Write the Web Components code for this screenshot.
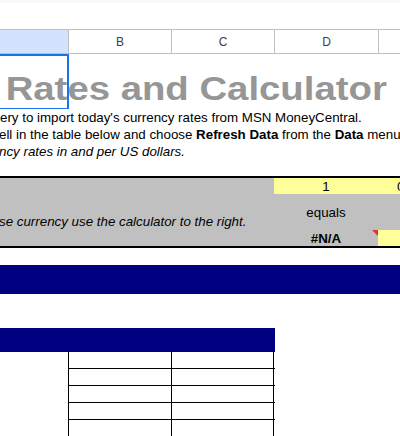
<!DOCTYPE html>
<html>
<head>
<meta charset="utf-8">
<title>Currency Rates and Calculator</title>
<style>
  html, body { margin: 0; padding: 0; background: #fff; overflow: hidden; }
  body { font-family: "Liberation Sans", Arial, sans-serif; width: 400px; height: 436px; }
</style>
</head>
<body>
<sheet-app></sheet-app>

<script>
class SheetApp extends HTMLElement {
    constructor() {
        super();
        this.attachShadow({ mode: 'open' });
        this.shadowRoot.innerHTML = `
            <style>
                :host { display: block; width: 400px; height: 436px; overflow: hidden; }
                .strip { height: 3px; background: #f8f9fa; }
                .toolbar { height: 26px; background: #fff; }
            </style>
            <div class="strip"></div>
            <div class="toolbar"></div>
            <sheet-columns></sheet-columns>
            <sheet-title></sheet-title>
            <sheet-notes></sheet-notes>
            <sheet-calculator></sheet-calculator>
            <sheet-banner></sheet-banner>
            <sheet-table></sheet-table>
        `;
    }
}

class SheetColumns extends HTMLElement {
    constructor() {
        super();
        this.attachShadow({ mode: 'open' });
        this.shadowRoot.innerHTML = `
            <style>
                :host {
                    display: grid;
                    grid-template-columns: 69px 103px 103px 104px 1fr;
                    height: 25px;
                    box-sizing: border-box;
                    border-top: 1px solid #c0c0c0;
                    border-bottom: 1px solid #c0c0c0;
                    font: 12px "Liberation Sans", Arial, sans-serif;
                    color: #3c4043;
                }
                div {
                    display: flex;
                    align-items: center;
                    justify-content: center;
                    box-sizing: border-box;
                    border-right: 1px solid #c0c0c0;
                }
                .selected { background: #d3e3fd; }
                .last { border-right: 0; }
            </style>
            <div class="selected"></div>
            <div>B</div>
            <div>C</div>
            <div>D</div>
            <div class="last"></div>
        `;
    }
}

class SheetTitle extends HTMLElement {
    constructor() {
        super();
        this.attachShadow({ mode: 'open' });
        this.shadowRoot.innerHTML = `
            <style>
                :host {
                    display: block;
                    position: relative;
                    height: 55px;
                    overflow: hidden;
                }
                h1 {
                    margin: 0;
                    padding: 14px 0 0 5px;
                    font: bold 34px/40px "Liberation Sans", Arial, sans-serif;
                    color: #969696;
                    white-space: nowrap;
                    transform: scaleX(1.127);
                    transform-origin: 0 0;
                }
                .selection {
                    position: absolute;
                    left: -3px;
                    top: 0;
                    width: 68px;
                    height: 52px;
                    border: 2px solid #1a73e8;
                }
            </style>
            <h1>Rates and Calculator</h1>
            <div class="selection"></div>
        `;
    }
}

class SheetNotes extends HTMLElement {
    constructor() {
        super();
        this.attachShadow({ mode: 'open' });
        this.shadowRoot.innerHTML = `
            <style>
                :host {
                    display: block;
                    height: 67px;
                    overflow: hidden;
                    font: 13.33px/17px "Liberation Sans", Arial, sans-serif;
                    color: #000;
                    white-space: nowrap;
                }
                p { margin: 0; }
                .b { margin-left: -1px; }
                .c { margin-left: -1px; font-style: italic; }
            </style>
            <p>ery to import today's currency rates from MSN MoneyCentral.</p>
            <p class="b">ell in the table below and choose <b>Refresh Data</b> from the <b>Data</b> menu</p>
            <p class="c">ncy rates in and per US dollars.</p>
        `;
    }
}

class SheetCalculator extends HTMLElement {
    constructor() {
        super();
        this.attachShadow({ mode: 'open' });
        this.shadowRoot.innerHTML = `
            <style>
                :host {
                    display: grid;
                    grid-template-columns: 274px 104px 1fr;
                    grid-template-rows: 16px 36px 16px;
                    box-sizing: border-box;
                    height: 72px;
                    background: #c0c0c0;
                    border-top: 2px solid #000;
                    border-bottom: 2px solid #000;
                    font: 13.33px/16px "Liberation Sans", Arial, sans-serif;
                    color: #000;
                }
                .note {
                    grid-column: 1;
                    grid-row: 2 / 4;
                    font-style: italic;
                    white-space: nowrap;
                    padding-top: 20px;
                    margin-left: -1px;
                }
                .cell {
                    display: flex;
                    align-items: center;
                    justify-content: center;
                    box-sizing: border-box;
                    padding-top: 2px;
                }
                .input { background: #ffff99; }
                .amount { grid-column: 2; grid-row: 1; }
                .currency { grid-column: 3; grid-row: 1; overflow: hidden; justify-content: flex-start; padding-left: 19px; }
                .equals { grid-column: 2; grid-row: 2; }
                .result { grid-column: 2; grid-row: 3; font-weight: bold; position: relative; }
                .result-cell { grid-column: 3; grid-row: 3; }
                .result::after {
                    content: "";
                    position: absolute;
                    top: 0;
                    right: 0;
                    border-top: 6px solid #dd3333;
                    border-left: 6px solid transparent;
                }
            </style>
            <div class="note">se currency use the calculator to the right.</div>
            <div class="cell input amount">1</div>
            <div class="cell input currency">0</div>
            <div class="cell equals">equals</div>
            <div class="cell result">#N/A</div>
            <div class="cell input result-cell"></div>
        `;
    }
}

class SheetBanner extends HTMLElement {
    constructor() {
        super();
        this.attachShadow({ mode: 'open' });
        this.shadowRoot.innerHTML = `
            <style>
                :host {
                    display: block;
                    height: 29px;
                    margin-top: 17px;
                    background: #000080;
                }
            </style>
        `;
    }
}

class SheetTable extends HTMLElement {
    constructor() {
        super();
        this.attachShadow({ mode: 'open' });
        const rows = Array.from({ length: 6 }, () => '<div class="row"><span></span><span></span></div>').join('');
        this.shadowRoot.innerHTML = `
            <style>
                :host { display: block; margin-top: 34px; }
                .head { width: 275px; height: 24px; background: #000080; }
                .row {
                    display: grid;
                    grid-template-columns: 103px 103px;
                    margin-left: 68px;
                    width: 207px;
                    height: 17px;
                    box-sizing: border-box;
                    border-bottom: 1px solid #000;
                }
                span { border-left: 1px solid #000; }
                span:last-child { border-right: 1px solid #000; }
            </style>
            <div class="head"></div>
            ${rows}
        `;
    }
}

customElements.define('sheet-app', SheetApp);
customElements.define('sheet-columns', SheetColumns);
customElements.define('sheet-title', SheetTitle);
customElements.define('sheet-notes', SheetNotes);
customElements.define('sheet-calculator', SheetCalculator);
customElements.define('sheet-banner', SheetBanner);
customElements.define('sheet-table', SheetTable);
</script>
</body>
</html>
